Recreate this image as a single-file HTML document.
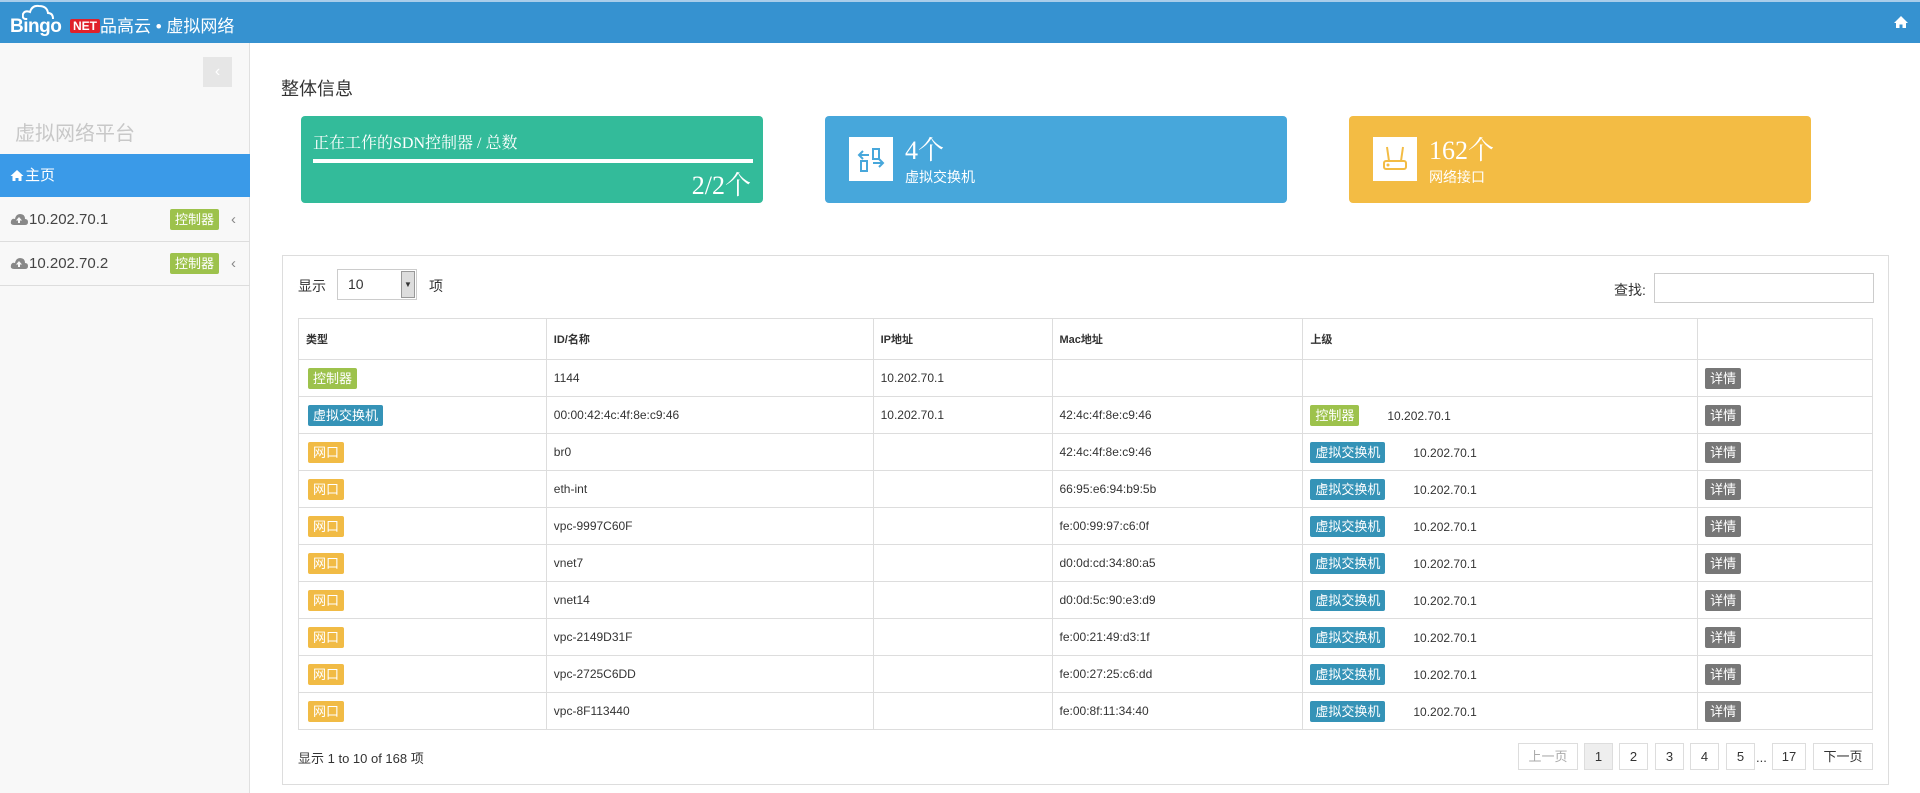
<!DOCTYPE html>
<html><head><meta charset="utf-8"><style>
*{box-sizing:border-box;margin:0;padding:0}
body{width:1920px;height:793px;overflow:hidden;background:#fff;font-family:"Liberation Sans","Noto Sans CJK SC",sans-serif;color:#333;position:relative}
.abs{position:absolute}
#hdr{left:0;top:0;width:1920px;height:43px;background:#3692d0;border-top:2px solid #a9cdea}
#side{left:0;top:43px;width:250px;height:750px;background:#f8f8f8;border-right:1px solid #e0e0e0}
.srow{position:absolute;left:0;width:250px;height:44px;border-bottom:1px solid #ddd;font-size:15px;line-height:44px;padding-left:10px;color:#444}
.bd{display:inline-block;color:#fff;font-size:13px;line-height:21px;padding:0 5px;border-radius:2px}
.g{background:#9dc24c}.b{background:#3593b7}.y{background:#f1bb45}.d{background:#777}
.card{position:absolute;top:116px;height:87px;width:462px;border-radius:4px;color:#fff}
table{border-collapse:collapse;position:absolute;left:298px;top:318px;width:1575px;font-size:12px}
td,th{border:1px solid #ddd;text-align:left;padding:0 7px;height:37px;font-weight:normal}
td:first-child{padding-left:9px}
th{height:41px;font-weight:bold;font-size:11px}
.pg{position:absolute;top:743px;height:27px;border:1px solid #ddd;font-size:13px;line-height:25px;text-align:center;color:#333}
.cl{display:inline-block;vertical-align:-2px;margin-right:1px}
</style></head><body>
<div id="hdr" class="abs">
 <svg class="abs" style="left:22px;top:2px" width="34" height="16"><path d="M4 15 Q0 15 1 10 Q3 6 8 8 Q10 1 17 2 Q25 2 26 9 Q31 9 31 15" fill="none" stroke="#fff" stroke-width="2"/></svg>
 <div class="abs" style="left:10px;top:14px;color:#fff;font-weight:bold;font-size:19px;letter-spacing:-0.5px">Bingo</div>
 <div class="abs" style="left:70px;top:17px;background:#e0202a;color:#fff;font-weight:bold;font-size:12px;line-height:14px;padding:0 3px;border-radius:2px">NET</div>
 <div class="abs" style="left:100px;top:10px;color:#fff;font-size:17px">品高云 • 虚拟网络</div>
 <svg class="abs" style="left:1893px;top:13px" width="16" height="14"><path d="M8 1 L1 8 L3 8 L3 13 L6.5 13 L6.5 9.5 L9.5 9.5 L9.5 13 L13 13 L13 8 L15 8 Z" fill="#fff"/></svg>
</div>
<div id="side" class="abs">
 <div class="abs" style="left:203px;top:14px;width:29px;height:30px;background:#e6e6e6;color:#fff;text-align:center;line-height:30px;font-size:16px">‹</div>
 <div class="abs" style="left:15px;top:74px;font-size:20px;color:#c8c8c8">虚拟网络平台</div>
 <div class="srow" style="top:111px;background:#3a9ae8;color:#fff;border:none;height:43px;line-height:43px"><svg class="cl" width="14" height="13"><path d="M7 1 L0.5 7 L2.5 7 L2.5 12 L5.5 12 L5.5 9 L8.5 9 L8.5 12 L11.5 12 L11.5 7 L13.5 7 Z" fill="#fff"/></svg>主页</div>
 <div class="srow" style="top:155px"><svg class="cl" width="18" height="13"><path d="M4 12 Q0 12 1 8 Q2 5 5 6 Q6 1 10 1 Q15 1 15 6 Q18 6 18 9 Q18 12 15 12 Z" fill="#888"/><path d="M9 4 L6 7.5 H8 V10 H10 V7.5 H12 Z" fill="#f8f8f8"/></svg>10.202.70.1<span class="bd g abs" style="left:170px;top:11px">控制器</span><span class="abs" style="left:231px;color:#888">‹</span></div>
 <div class="srow" style="top:199px"><svg class="cl" width="18" height="13"><path d="M4 12 Q0 12 1 8 Q2 5 5 6 Q6 1 10 1 Q15 1 15 6 Q18 6 18 9 Q18 12 15 12 Z" fill="#888"/><path d="M9 4 L6 7.5 H8 V10 H10 V7.5 H12 Z" fill="#f8f8f8"/></svg>10.202.70.2<span class="bd g abs" style="left:170px;top:11px">控制器</span><span class="abs" style="left:231px;color:#888">‹</span></div>
</div>
<div class="abs" style="left:281px;top:75px;font-size:18px;color:#333">整体信息</div>
<div class="card" style="left:301px;background:#33bb9a">
 <div class="abs" style="left:12px;top:14px;font-size:16px;font-family:'Liberation Serif','Noto Serif CJK SC',serif">正在工作的SDN控制器 / 总数</div>
 <div class="abs" style="left:12px;top:43px;width:440px;height:4px;background:#fff"></div>
 <div class="abs" style="right:12px;top:49px;font-size:26px;font-family:'Liberation Serif','Noto Serif CJK SC',serif">2/2个</div>
</div>
<div class="card" style="left:825px;background:#47a7db">
 <div class="abs" style="left:24px;top:21px;width:44px;height:44px;background:#fff"><svg width="44" height="44"><g fill="none" stroke="#47a7db" stroke-width="2"><path d="M10 18h10M14 14l-4 4 4 4M24 26h10M30 22l4 4-4 4"/><rect x="24" y="12" width="6" height="10"/><rect x="12" y="24" width="6" height="10"/></g></svg></div>
 <div class="abs" style="left:80px;top:14px;font-size:26px;font-family:'Liberation Serif','Noto Serif CJK SC',serif">4个</div>
 <div class="abs" style="left:80px;top:51px;font-size:14px">虚拟交换机</div>
</div>
<div class="card" style="left:1349px;background:#f3bc44">
 <div class="abs" style="left:24px;top:21px;width:44px;height:44px;background:#fff"><svg width="44" height="44"><g fill="none" stroke="#f3bc44" stroke-width="2"><path d="M14 10l2 14M30 10l-2 14"/><rect x="11" y="24" width="22" height="8" rx="2"/></g><circle cx="15" cy="28" r="1.5" fill="#f3bc44"/></svg></div>
 <div class="abs" style="left:80px;top:14px;font-size:26px;font-family:'Liberation Serif','Noto Serif CJK SC',serif">162个</div>
 <div class="abs" style="left:80px;top:51px;font-size:14px">网络接口</div>
</div>
<div class="abs" style="left:282px;top:255px;width:1607px;height:530px;border:1px solid #ddd"></div>
<div class="abs" style="left:298px;top:276px;font-size:14px">显示</div>
<div class="abs" style="left:337px;top:269px;width:80px;height:31px;border:1px solid #ccc;font-size:14px;line-height:29px;padding-left:10px">10
 <div class="abs" style="right:1px;top:1px;width:14px;height:27px;background:#ddd;border:1px solid #999;font-size:8px;text-align:center;line-height:25px">▼</div></div>
<div class="abs" style="left:429px;top:276px;font-size:14px">项</div>
<div class="abs" style="left:1614px;top:280px;font-size:14px">查找:</div>
<div class="abs" style="left:1654px;top:273px;width:220px;height:30px;border:1px solid #ccc"></div>
<table>
<colgroup><col style="width:248px"><col style="width:327px"><col style="width:179px"><col style="width:251px"><col style="width:395px"><col style="width:175px"></colgroup>
<tr><th>类型</th><th>ID/名称</th><th>IP地址</th><th>Mac地址</th><th>上级</th><th></th></tr>
<tr><td><span class="bd g">控制器</span></td><td>1144</td><td>10.202.70.1</td><td></td><td></td><td><span class="bd d">详情</span></td></tr>
<tr><td><span class="bd b">虚拟交换机</span></td><td>00:00:42:4c:4f:8e:c9:46</td><td>10.202.70.1</td><td>42:4c:4f:8e:c9:46</td><td><span class="bd g">控制器</span><span style="margin-left:28px">10.202.70.1</span></td><td><span class="bd d">详情</span></td></tr>
<tr><td><span class="bd y">网口</span></td><td>br0</td><td></td><td>42:4c:4f:8e:c9:46</td><td><span class="bd b">虚拟交换机</span><span style="margin-left:28px">10.202.70.1</span></td><td><span class="bd d">详情</span></td></tr>
<tr><td><span class="bd y">网口</span></td><td>eth-int</td><td></td><td>66:95:e6:94:b9:5b</td><td><span class="bd b">虚拟交换机</span><span style="margin-left:28px">10.202.70.1</span></td><td><span class="bd d">详情</span></td></tr>
<tr><td><span class="bd y">网口</span></td><td>vpc-9997C60F</td><td></td><td>fe:00:99:97:c6:0f</td><td><span class="bd b">虚拟交换机</span><span style="margin-left:28px">10.202.70.1</span></td><td><span class="bd d">详情</span></td></tr>
<tr><td><span class="bd y">网口</span></td><td>vnet7</td><td></td><td>d0:0d:cd:34:80:a5</td><td><span class="bd b">虚拟交换机</span><span style="margin-left:28px">10.202.70.1</span></td><td><span class="bd d">详情</span></td></tr>
<tr><td><span class="bd y">网口</span></td><td>vnet14</td><td></td><td>d0:0d:5c:90:e3:d9</td><td><span class="bd b">虚拟交换机</span><span style="margin-left:28px">10.202.70.1</span></td><td><span class="bd d">详情</span></td></tr>
<tr><td><span class="bd y">网口</span></td><td>vpc-2149D31F</td><td></td><td>fe:00:21:49:d3:1f</td><td><span class="bd b">虚拟交换机</span><span style="margin-left:28px">10.202.70.1</span></td><td><span class="bd d">详情</span></td></tr>
<tr><td><span class="bd y">网口</span></td><td>vpc-2725C6DD</td><td></td><td>fe:00:27:25:c6:dd</td><td><span class="bd b">虚拟交换机</span><span style="margin-left:28px">10.202.70.1</span></td><td><span class="bd d">详情</span></td></tr>
<tr><td><span class="bd y">网口</span></td><td>vpc-8F113440</td><td></td><td>fe:00:8f:11:34:40</td><td><span class="bd b">虚拟交换机</span><span style="margin-left:28px">10.202.70.1</span></td><td><span class="bd d">详情</span></td></tr>
</table>
<div class="abs" style="left:298px;top:748px;font-size:13px">显示 1 to 10 of 168 项</div>
<div class="pg" style="left:1518px;width:60px;color:#aaa">上一页</div>
<div class="pg" style="left:1584px;width:29px;background:#eee">1</div>
<div class="pg" style="left:1619px;width:29px">2</div>
<div class="pg" style="left:1655px;width:29px">3</div>
<div class="pg" style="left:1690px;width:29px">4</div>
<div class="pg" style="left:1726px;width:29px">5</div>
<div class="abs" style="left:1756px;top:750px;font-size:13px">...</div>
<div class="pg" style="left:1772px;width:34px">17</div>
<div class="pg" style="left:1813px;width:60px">下一页</div>
</body></html>
